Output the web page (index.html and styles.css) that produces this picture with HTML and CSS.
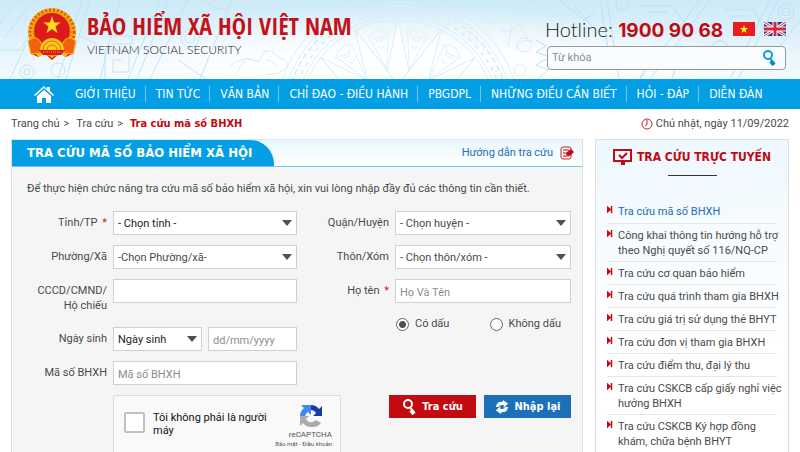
FILE: index.html
```html
<!DOCTYPE html>
<html lang="vi">
<head>
<meta charset="utf-8">
<meta name="viewport" content="width=device-width, initial-scale=1">
<title>Tra cứu mã số BHXH</title>
<link rel="stylesheet" href="styles.css">
</head>
<body>
<header class="header">
  <svg class="header-art" viewBox="0 0 800 79" preserveAspectRatio="xMidYMid slice" aria-hidden="true">
    <defs>
      <g id="ray"><path d="M398 20 L411 80 H385 Z"/></g>
      <g id="gap" fill="none" stroke="#e0f1fb"><path d="M398 68 L388 32 Q398 24 408 32 Z M393 36 q5 6 10 0 M395 44 q3 5 6 0 M390 32 q8 8 16 0"/></g>
    </defs>
    <g fill="none" stroke="#c3e3f5" stroke-width="1">
      <path d="M-5 30 L18 0 M4 38 L34 0 M0 50 h20 l14 -24 M10 79 L26 44 M82 0 L58 79 M90 0 L66 79 M50 20 L96 44 M120 0 L100 79 M160 0 L128 79 M168 0 L137 79 M105 79 V50 h24 v22 h-16 v-12 h8 M112 44 h20 v-8 h-26"/>
      <circle cx="27" cy="72" r="7"/><circle cx="27" cy="72" r="3"/><circle cx="58" cy="70" r="7"/><circle cx="190" cy="38" r="9"/><circle cx="190" cy="38" r="5"/>
      <path d="M188 0 L150 79 M232 0 L200 79 M205 0 q10 14 26 6 M178 60 L206 79 M162 30 l28 -30"/>
    </g>
    <g fill="none" stroke="#d7edf9">
      <path d="M236 74 l10 -16 12 4 8 -12 M230 66 q14 -12 30 -4 M262 52 q10 -4 18 6 q10 2 6 10 q-8 8 -20 6 M266 60 q8 0 12 8 M240 12 l12 -12 M262 0 l-6 18 14 4"/>
      <path d="M488 0 l-8 18 14 6 8 -20 M496 4 l-8 16 M500 30 q12 4 18 -6 l16 -14 M516 20 l14 22 M522 16 l20 -4 M512 26 l-4 20 M534 42 q-14 -6 -18 8 M530 4 l14 8"/>
      <circle cx="524" cy="45" r="7"/><circle cx="520" cy="70" r="6"/>
    </g>
    <g fill="none" stroke="#bde0f4">
      <path d="M536 40 l10 6 -10 6 14 5 -14 8 12 5 -10 9 M560 0 l24 20 12 -8 M574 6 l18 20 M600 0 l10 60 M607 0 l12 79 M640 6 h32 l20 26 M646 12 h22 M700 0 l-60 79 M710 0 l-60 79 M724 10 l30 0 12 22 M730 16 h20 M770 0 l-40 79 M778 0 l-40 79 M800 20 l-30 40 M640 79 l10 -26 h30 l-8 26"/>
      <circle cx="786" cy="12" r="8"/><circle cx="786" cy="12" r="4"/><circle cx="720" cy="50" r="9"/><circle cx="622" cy="4" r="6"/>
    </g>
    <g fill="none" stroke="#d9eefa">
      <circle cx="398" cy="118" r="122"/><circle cx="398" cy="118" r="116"/><circle cx="398" cy="118" r="102"/><circle cx="398" cy="118" r="98"/>
      <circle cx="398" cy="118" r="112" stroke-width="2" stroke-dasharray="6 3"/><circle cx="398" cy="118" r="109" stroke-dasharray="2 3"/><circle cx="398" cy="118" r="106" stroke-width="2" stroke-dasharray="4 5"/>
    </g>
    <g fill="#fff" stroke="#d9eefa">
      <use href="#ray"/><use href="#ray" transform="rotate(26 398 118)"/><use href="#ray" transform="rotate(-26 398 118)"/><use href="#ray" transform="rotate(52 398 118)"/><use href="#ray" transform="rotate(-52 398 118)"/>
      <use href="#gap" transform="rotate(13 398 118)"/><use href="#gap" transform="rotate(-13 398 118)"/><use href="#gap" transform="rotate(39 398 118)"/><use href="#gap" transform="rotate(-39 398 118)"/>
    </g>
  </svg>
  <a class="brand" href="#">
    <svg class="emblem" viewBox="0 0 54 54" aria-hidden="true">
      <path d="M8 30 L5 46 13 50 19 46 27 53 35 46 41 50 49 46 46 30Z" fill="#e3200f"/>
      <path d="M10 45 l8 -4 9 6 9 -6 8 4 -3 5 -7 -4 -7 5 -7 -5 -7 4z" fill="#f7b516"/>
      <circle cx="27" cy="25" r="24" fill="#f6ae12"/>
      <circle cx="27" cy="25" r="22" fill="none" stroke="#df5a10" stroke-width="3" stroke-dasharray="2 2"/>
      <circle cx="27" cy="25" r="19" fill="none" stroke="#e88512" stroke-width="2" stroke-dasharray="1 2"/>
      <circle cx="27" cy="24" r="18" fill="#de1b1b"/>
      <path d="M27 9 l2 6.500 h6.500 l-5 4 2 6.500 -5.500 -4 -5.500 4 2 -6.500 -5 -4 h6.500z" fill="#ffdf1a"/>
      <path d="M3 34 q10 -8 14 4 l-2 8 -9 1z M51 34 q-10 -8 -14 4 l2 8 9 1z" fill="#f0620f" stroke="#f7b516"/>
      <path d="M15 43 a12 12 0 0 1 24 0z" fill="#f9c81c"/>
      <g fill="none" stroke="#e8690f"><path d="M18 43 a9 9 0 0 1 18 0 M22 43 a5 5 0 0 1 10 0"/></g>
      <path d="M14 43 h26 l-4 5 h-18z" fill="#d81c15"/><path d="M18 45 h18" stroke="#f7a516" stroke-dasharray="1 1"/>
    </svg>
    <span class="brand-text">
      <span class="brand-name">BẢO HIỂM XÃ HỘI VIỆT NAM</span>
      <span class="brand-sub">VIETNAM SOCIAL SECURITY</span>
    </span>
  </a>
  <div class="tools">
    <div class="hotline">
      <span>Hotline: <b>1900 90 68</b></span>
      <a href="#" aria-label="Tiếng Việt"><svg class="flag" viewBox="0 0 22 14"><path d="M0 0h22v14H0z" fill="#ec1c1c"/><path d="M11 3l1 3h3l-2.400 2 .9 3-2.500-1.800L8.500 11l.9-3L7 6h3z" fill="#ff0"/></svg></a>
      <a href="#" aria-label="English"><svg class="flag" viewBox="0 0 22 14"><path d="M0 0h22v14H0z" fill="#2c3f8f"/><path d="M0 0l22 14M22 0L0 14" stroke="#fff" stroke-width="3"/><path d="M0 0l22 14M22 0L0 14" stroke="#d8253a"/><path d="M11 0v14M0 7h22" stroke="#fff" stroke-width="5"/><path d="M11 0v14M0 7h22" stroke="#d8253a" stroke-width="3"/></svg></a>
    </div>
    <form class="search">
      <input type="text" placeholder="Từ khóa" aria-label="Từ khóa">
      <button type="button" aria-label="Tìm kiếm"><svg viewBox="0 0 14 16"><circle cx="6" cy="5" r="4" fill="none" stroke="#0b9be0" stroke-width="2"/><path d="M8 8l2 3" stroke="#0b9be0" stroke-width="2"/><path d="M9 11l3 4" stroke="#0b84c8" stroke-width="4"/></svg></button>
    </form>
  </div>
</header>
<nav class="nav">
  <a class="home" href="#" aria-label="Trang chủ"><svg viewBox="0 0 20 17"><path d="M10 0L0 9l1 1 9-8 9 8 1-1-4-4V1h-3v2z" fill="#fff"/><path d="M10 4L3 10v7h5v-5h4v5h5v-7z" fill="#fff"/></svg></a>
  <a href="#">GIỚI THIỆU</a><a href="#">TIN TỨC</a><a href="#">VĂN BẢN</a><a href="#">CHỈ ĐẠO - ĐIỀU HÀNH</a><a href="#">PBGDPL</a><a href="#">NHỮNG ĐIỀU CẦN BIẾT</a><a href="#">HỎI - ĐÁP</a><a href="#">DIỄN ĐÀN</a>
</nav>
<div class="page">
  <div class="crumbs">
    <div class="trail"><a href="#">Trang chủ</a><span>&gt;</span><a href="#">Tra cứu</a><span>&gt;</span><b>Tra cứu mã số BHXH</b></div>
    <div class="date"><svg viewBox="0 0 12 12"><circle cx="6" cy="6" r="5" fill="none" stroke="#c8202c"/><path d="M6 2v4.500L4 8" fill="none" stroke="#c8202c"/></svg>Chủ nhật, ngày 11/09/2022</div>
  </div>
  <div class="columns">
    <main class="panel">
      <div class="panel-head">
        <h1>TRA CỨU MÃ SỐ BẢO HIỂM XÃ HỘI</h1>
        <a href="#">Hướng dẫn tra cứu
          <svg viewBox="0 0 14 14"><rect x="1" y="1" width="10" height="12" rx="2" fill="none" stroke="#c8202c"/><path d="M3 4h6M3 7h4M3 10h6" stroke="#c20a10"/><path d="M6 9l1-3 4-3 3 3-4 4z" fill="#c20a10"/></svg></a>
      </div>
      <form class="panel-body">
        <p>Để thực hiện chức năng tra cứu mã số bảo hiểm xã hội, xin vui lòng nhập đầy đủ các thông tin cần thiết.</p>
        <div class="fields">
          <div class="half half-left">
            <label for="tinh">Tỉnh/TP <em>*</em></label>
            <select id="tinh" class="dark"><option>- Chọn tỉnh -</option></select>
            <label for="xa">Phường/Xã</label>
            <select id="xa"><option>-Chọn Phường/xã-</option></select>
            <label for="cccd">CCCD/CMND/<br>Hộ chiếu</label>
            <input id="cccd" type="text">
            <label for="ns">Ngày sinh</label>
            <div class="pair">
              <select id="ns" class="dark"><option>Ngày sinh</option></select>
              <input type="text" placeholder="dd/mm/yyyy" aria-label="Ngày sinh">
            </div>
            <label for="bhxh">Mã số BHXH</label>
            <input id="bhxh" type="text" placeholder="Mã số BHXH">
            <div class="captcha">
              <input type="checkbox" id="robot">
              <label for="robot">Tôi không phải là người máy</label>
              <div class="captcha-brand">
                <svg viewBox="0 0 24 24"><path d="M12 1a11 11 0 0 1 8 4l3-3v10h-9l3-3a6 6 0 0 0-5-3z" fill="#1c3aa9"/><path d="M1 12A11 11 0 0 1 5 4L2 1h10v10L9 8a6 6 0 0 0-3 4z" fill="#4285f4"/><path d="M12 23a11 11 0 0 1-8-4l-3 3V12h9l-3 3a6 6 0 0 0 10 1l5 3a11 11 0 0 1-10 4z" fill="#ababab"/></svg>
                <span>reCAPTCHA</span>
                <small>Bảo mật - Điều khoản</small>
              </div>
            </div>
          </div>
          <div class="half half-right">
            <label for="huyen">Quận/Huyện</label>
            <select id="huyen"><option>- Chọn huyện -</option></select>
            <label for="thon">Thôn/Xóm</label>
            <select id="thon"><option>- Chọn thôn/xóm -</option></select>
            <label for="ten">Họ tên <em>*</em></label>
            <input id="ten" type="text" placeholder="Họ Và Tên">
            <div class="radios">
              <label><input type="radio" name="dau" checked>Có dấu</label>
              <label><input type="radio" name="dau">Không dấu</label>
            </div>
            <div class="actions">
              <button type="button" class="btn-red"><svg viewBox="0 0 14 16"><circle cx="6" cy="5" r="4" fill="none" stroke="#fff" stroke-width="2"/><path d="M8 8l2 3" stroke="#fff" stroke-width="2"/><path d="M9 11l3 4" stroke="#fff" stroke-width="4"/></svg>Tra cứu</button>
              <button type="button" class="btn-blue"><svg viewBox="0 0 16 16"><path d="M1 8q1-7 8-6V0l6 4-5 5V6Q6 5 4 8z M15 8q-1 7-8 6v2l-6-4 5-5v3q4 1 6-2z" fill="#fff"/></svg>Nhập lại</button>
            </div>
          </div>
        </div>
      </form>
    </main>
    <aside class="side">
      <h2><svg viewBox="0 0 20 16"><path d="M1 1h17v11H1z" fill="none" stroke="#c20a10" stroke-width="2"/><path d="M8 12h4v4H8z" fill="#c20a10"/><path d="M6 6l3 3 5-5" fill="none" stroke="#c20a10" stroke-width="2"/></svg>TRA CỨU TRỰC TUYẾN</h2>
      <ul>
        <li class="active"><a href="#">Tra cứu mã số BHXH</a></li>
        <li><a href="#">Công khai thông tin hướng hỗ trợ theo Nghị quyết số 116/NQ-CP</a></li>
        <li><a href="#">Tra cứu cơ quan bảo hiểm</a></li>
        <li><a href="#">Tra cứu quá trình tham gia BHXH</a></li>
        <li><a href="#">Tra cứu giá trị sử dụng thẻ BHYT</a></li>
        <li><a href="#">Tra cứu đơn vị tham gia BHXH</a></li>
        <li><a href="#">Tra cứu điểm thu, đại lý thu</a></li>
        <li><a href="#">Tra cứu CSKCB cấp giấy nghỉ việc hưởng BHXH</a></li>
        <li><a href="#">Tra cứu CSKCB Ký hợp đồng khám, chữa bệnh BHYT</a></li>
      </ul>
    </aside>
  </div>
</div>
</body>
</html>
```
FILE: styles.css
```css
* { box-sizing: border-box; }
body {
  margin: 0;
  background: #fff;
  color: #4a4a4a;
  font: 11px/16px Roboto, "Liberation Sans", sans-serif;
  overflow: hidden;
}
a { color: inherit; text-decoration: none; }
svg { display: block; flex: none; }
input, select, button { font: inherit; color: inherit; margin: 0; min-width: 0; border-radius: 0; }
::placeholder { color: #8c8c8c; opacity: 1; }
em { color: #c8202c; font-style: normal; margin-left: 2px; }

.header {
  position: relative;
  display: flex;
  justify-content: space-between;
  align-items: flex-start;
  padding: 7px 14px 9px 25px;
  background:
    radial-gradient(ellipse 48% 90% at 50% 100%, #fff 40%, rgba(255, 255, 255, 0) 100%),
    linear-gradient(180deg, #cdeaf8 0%, #f3fafe 100%);
}
.header-art { position: absolute; inset: 0; width: 100%; height: 100%; }
.brand { position: relative; display: flex; gap: 8px; }
.emblem { width: 54px; height: 54px; }
.brand-text { display: flex; flex-direction: column; padding-top: 2px; }
.brand-name { font: bold 24px/33px "Open Sans Condensed", "Roboto Condensed", sans-serif; color: #c41218; }
.brand-sub { font: 300 12px/15px Lato, sans-serif; color: #222; }
.tools { position: relative; width: 239px; padding-top: 10px; }
.hotline { display: flex; justify-content: space-between; align-items: center; height: 24px; margin-left: -2px; font: 300 20px/24px Lato, sans-serif; color: #222; white-space: nowrap; }
.hotline b { font: bold 19px/20px Inter, sans-serif; color: #c20a10; }
.flag { width: 22px; height: 14px; }
.search { display: flex; align-items: center; height: 24px; margin-top: 5px; border: 1px solid #999; border-radius: 4px; background: #fafdff; padding: 0 9px 0 4px; }
.search input { flex: 1; border: 0; background: none; padding: 0; outline: 0; }
.search button { border: 0; background: none; padding: 0; }
.search svg { width: 14px; height: 16px; }

.nav { display: flex; align-items: center; height: 30px; background: #029fe4; padding-left: 34px; color: #fff; font: 12px/16px "DejaVu Sans Condensed", sans-serif; white-space: nowrap; }
.nav a { padding: 0 9px 0 10px; }
.nav a + a + a { border-left: 1px solid #6cc8f0; }
.nav .home { padding: 0 11px 0 0; }
.home svg { width: 20px; height: 17px; }

.page { padding: 0 11px; }
.crumbs { display: flex; justify-content: space-between; align-items: center; height: 30px; }
.trail { display: flex; gap: 4px; }
.trail span { margin-right: 3px; }
.trail b { color: #c20a10; font: bold 11px/16px "DejaVu Sans Condensed", sans-serif; }
.date { display: flex; align-items: center; gap: 3px; }
.date svg { width: 12px; height: 12px; }
.columns { display: grid; grid-template-columns: minmax(0, 1fr) 194px; gap: 12px; }

.panel { border: 1px solid #ddd; border-top-color: #d3ecf9; background: #f5f5f5; }
.panel-head { display: flex; justify-content: space-between; align-items: center; height: 27px; padding-right: 8px; border-bottom: 1px solid #6fc6ee; background: linear-gradient(#eaf7fe, #fff); color: #1c6fb8; }
.panel-head h1 { margin: 0; align-self: flex-start; padding: 0 22px 0 15px; font: bold 13px/26px "DejaVu Sans Condensed", sans-serif; background: #029fe4; color: #fff; border-top-right-radius: 24px; white-space: nowrap; }
.panel-head a { display: flex; align-items: center; gap: 7px; }
.panel-head svg { width: 14px; height: 14px; }
.panel-body { padding: 14px 11px 8px 0; }
.panel-body p { margin: 0 0 14px 15px; }
.fields { display: grid; grid-template-columns: 285fr 274fr; }
.half { display: grid; align-items: start; align-content: start; row-gap: 10px; column-gap: 6px; }
.half-left { grid-template-columns: 95px minmax(0, 1fr); }
.half-right { grid-template-columns: 92px minmax(0, 1fr); }
.half > label { text-align: right; padding-top: 4px; line-height: 15px; }
.half input[type=text], .half select { width: 100%; height: 24px; border: 1px solid #d0d0d0; background-color: #fff; padding: 2px 4px 0; outline: 0; }
.half select {
  appearance: none;
  background-image: url("data:image/svg+xml,%3Csvg xmlns='http://www.w3.org/2000/svg' width='10' height='6'%3E%3Cpath d='M0 0h10L5 6z' fill='%23505050'/%3E%3C/svg%3E");
  background-repeat: no-repeat;
  background-position: right 4px center;
}
.half select.dark { color: #222; }
.pair { display: grid; grid-template-columns: 1fr 1fr; gap: 6px; margin-top: 4px; }
.half > label[for=ns] { padding-top: 8px; }

.captcha { grid-column: 2; display: flex; align-items: flex-start; width: 228px; height: 76px; padding: 0 8px 0 10px; border: 1px solid #ddd; border-radius: 2px; background: #f9f9f9; color: #111; }
.captcha > input { appearance: none; flex: none; width: 21px; height: 21px; margin-top: 16px; border: 2px solid #c1c1c1; border-radius: 2px; background: #fff; }
.captcha > label { flex: 1; margin: 15px 0 0 8px; line-height: 13px; }
.captcha-brand { display: flex; flex-direction: column; align-items: flex-end; width: 60px; margin-top: 8px; color: #555; font-size: 8px; line-height: 10px; white-space: nowrap; }
.captcha-brand svg { width: 24px; height: 24px; margin: 0 9px 2px 0; }
.captcha-brand small { font-size: 6px; line-height: 8px; }

.radios { grid-column: 2; display: flex; justify-content: space-between; padding: 3px 10px 0 1px; }
.radios label { display: flex; align-items: center; gap: 6px; }
.radios input { appearance: none; width: 13px; height: 13px; border: 1px solid #666; border-radius: 50%; background: #fff; }
.radios input:checked { background: radial-gradient(circle, #505050 3px, #fff 4px); }
.actions { grid-column: 1 / -1; display: flex; justify-content: flex-end; gap: 8px; margin-top: 53px; }
.actions button { display: flex; align-items: center; justify-content: center; gap: 6px; width: 87px; height: 23px; padding: 0; border: 0; color: #fff; font: bold 11px/16px "DejaVu Sans Condensed", sans-serif; }
.actions svg { width: 14px; height: 16px; }
.btn-red { background: #c20a10; }
.btn-blue { background: #1c6fb8; }

.side { border: 1px solid #ddd; background: linear-gradient(#eef8fe, #fff 200px); padding: 8px 11px; }
.side h2 { display: flex; align-items: center; justify-content: center; gap: 4px; margin: 0 0 24px; font: bold 12px/18px "DejaVu Sans Condensed", sans-serif; color: #c20a10; white-space: nowrap; padding-bottom: 10px; background: linear-gradient(#333, #333) center bottom / 49px 1px no-repeat; }
.side h2 svg { width: 20px; height: 16px; }
.side ul { list-style: none; margin: 0; padding: 0; }
.side li { padding: 4px 0 4px 11px; line-height: 15px; border-bottom: 1px solid #e6e6e6; background: url("data:image/svg+xml,%3Csvg xmlns='http://www.w3.org/2000/svg' width='6' height='7'%3E%3Cpath d='M0 0l4 3.500L0 7zM4 0h1v7H4z' fill='%23c20a10' stroke='%23c20a10' stroke-width='.5'/%3E%3C/svg%3E") 0 6px no-repeat; }
.side li + li { padding-bottom: 3px; }
.side li a { display: block; margin-right: -6px; }
.side .active { color: #1c6fb8; }
```
